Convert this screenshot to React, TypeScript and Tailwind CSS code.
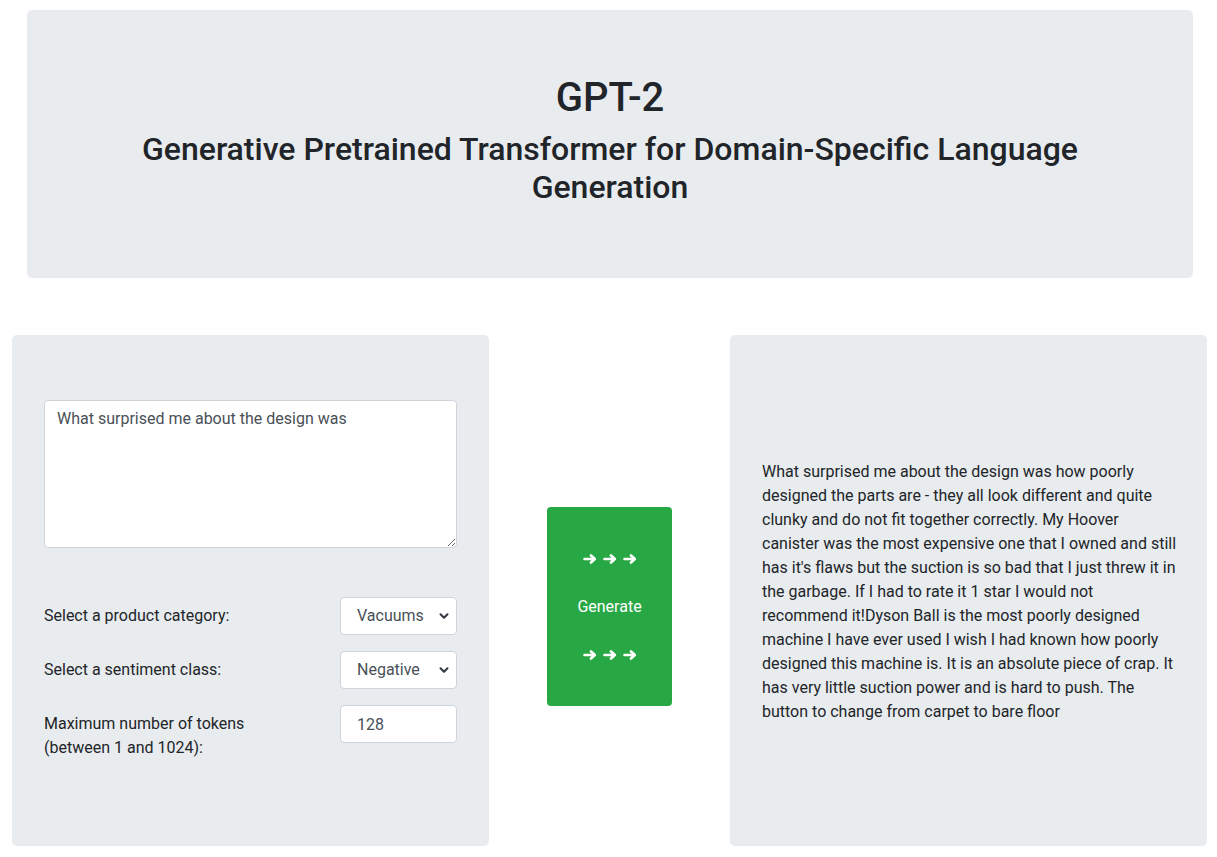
import { ChevronDown } from 'lucide-react'

const output = [
  'What surprised me about the design was how poorly',
  'designed the parts are - they all look different and quite',
  'clunky and do not fit together correctly. My Hoover',
  'canister was the most expensive one that I owned and still',
  "has it's flaws but the suction is so bad that I just threw it in",
  'the garbage. If I had to rate it 1 star I would not',
  'recommend it!Dyson Ball is the most poorly designed',
  'machine I have ever used I wish I had known how poorly',
  'designed this machine is. It is an absolute piece of crap. It',
  'has very little suction power and is hard to push. The',
  'button to change from carpet to bare floor',
]

function Arrow() {
  return (
    <svg viewBox="0 0 14 10" className="w-[14px] h-[10px]" fill="none" stroke="currentColor" strokeWidth={2.6} strokeLinecap="round" strokeLinejoin="round">
      <path d="M1.5 5H11.5M8 1.5L11.8 5L8 8.5" />
    </svg>
  )
}

function Arrows() {
  return (
    <div className="h-6 flex items-center justify-center gap-[6px]">
      <Arrow />
      <Arrow />
      <Arrow />
    </div>
  )
}

function SelectBox({ value }: { value: string }) {
  return (
    <div className="relative w-[117px]">
      <select
        defaultValue={value}
        className="appearance-none w-full h-[38px] bg-white border border-[#ced4da] rounded-[4px] pl-4 pr-6 text-[16px] text-[#495057] outline-none"
      >
        <option>{value}</option>
      </select>
      <ChevronDown className="absolute right-[6px] top-[12px] w-[14px] h-[14px] text-[#343a40] pointer-events-none" strokeWidth={3.5} />
    </div>
  )
}

export default function App() {
  return (
    <div className="min-h-screen bg-white text-[#212529] font-['Roboto','Noto_Sans',sans-serif] pt-[10px] pb-[11px]">
      {/* Header */}
      <div className="ml-[27px] w-[1166px] bg-[#e9ecef] rounded-[5px] px-8 py-16 text-center">
        <h1 className="text-[40px] leading-[48px] font-medium mb-2">GPT-2</h1>
        <h2 className="text-[32px] leading-[38px] font-medium mb-2">
          Generative Pretrained Transformer for Domain-Specific Language
          <br />
          Generation
        </h2>
      </div>

      <div className="flex mt-[57px] ml-[12px] gap-[58px]">
        {/* Input panel */}
        <div className="w-[477px] h-[511px] bg-[#e9ecef] rounded-[5px] px-8 pt-[65px]">
          <textarea
            defaultValue="What surprised me about the design was"
            className="block w-full h-[148px] bg-white border border-[#ced4da] rounded-[4px] px-3 py-[6px] text-[16px] leading-6 text-[#495057] outline-none"
          />
          <div className="mt-[49px] flex flex-col gap-4 text-[16px] leading-6">
            <div className="flex justify-between items-start">
              <label className="pt-[7px]">Select a product category:</label>
              <SelectBox value="Vacuums" />
            </div>
            <div className="flex justify-between items-start">
              <label className="pt-[7px]">Select a sentiment class:</label>
              <SelectBox value="Negative" />
            </div>
            <div className="flex justify-between items-start">
              <label className="pt-[7px]">
                Maximum number of tokens
                <br />
                (between 1 and 1024):
              </label>
              <input
                defaultValue="128"
                className="w-[117px] h-[38px] bg-white border border-[#ced4da] rounded-[4px] px-4 text-[16px] text-[#495057] outline-none"
              />
            </div>
          </div>
        </div>

        {/* Generate button */}
        <button className="self-start mt-[172px] w-[125px] h-[199px] bg-[#28a745] rounded-[4px] text-white text-[16px] leading-6 flex flex-col justify-center">
          <Arrows />
          <span className="block h-6" />
          <span className="block text-center">Generate</span>
          <span className="block h-6" />
          <Arrows />
        </button>

        {/* Output panel */}
        <div className="w-[477px] h-[511px] bg-[#e9ecef] rounded-[5px] px-8 flex items-center">
          <p className="text-[16px] leading-6 pt-[3px]">
            {output.map((line, i) => (
              <span key={i} className="block whitespace-nowrap">{line}</span>
            ))}
          </p>
        </div>
      </div>
    </div>
  )
}
